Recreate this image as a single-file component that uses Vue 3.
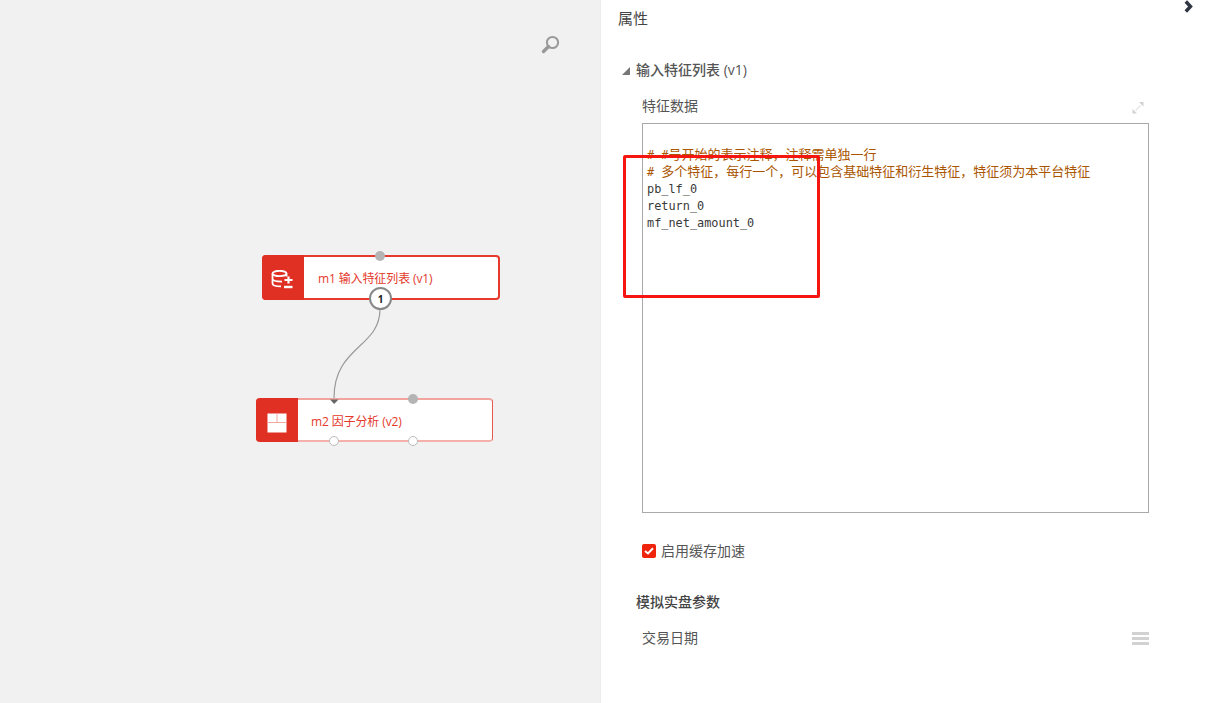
<script setup>
const codeLines = [
  [['l', '# #'], ['c', '号开始的表示注释，注释需单独一行']],
  [['l', '# '], ['c', '多个特征，每行一个，可以包含基础特征和衍生特征，特征须为本平台特征']],
]
const features = ['pb_lf_0', 'return_0', 'mf_net_amount_0']
</script>

<template>
  <div class="page">
    <section class="canvas">
      <svg class="search" width="24" height="24" viewBox="0 0 24 24">
        <circle cx="13.500" cy="9.500" r="5.600" fill="none" stroke="#999" stroke-width="2" />
        <path d="M9.500 13.500 L4.500 18.500" stroke="#999" stroke-width="3.400" stroke-linecap="round" />
      </svg>

      <svg class="edge" width="600" height="703" viewBox="0 0 600 703">
        <path d="M380 309 C380 348 334 346 334 398" fill="none" stroke="#999" stroke-width="1.200" />
        <path d="M330 399.500 H338.500 L334.200 404 Z" fill="#666" />
      </svg>

      <div class="node node-a">
        <div class="node-icon">
          <svg class="icon-db" width="23" height="20" viewBox="0 0 23 20" fill="none" stroke="#fff" stroke-width="1.800">
            <ellipse cx="8.500" cy="3.500" rx="7" ry="2.700" />
            <path d="M1.500 3.500 V13.500 C1.500 15.500 5 16.400 10 16.400 M1.500 8.800 C1.500 10.800 5 11.600 11 11.600 M15.500 3.500 V6.500" />
            <path d="M17.500 6.500 V13.500 M13.500 10 H21.500" stroke-width="2.200" />
            <path d="M13 17 H21.500" stroke-width="2.400" />
          </svg>
        </div>
        <div class="node-label">m1 输入特征列表 (v1)</div>
        <span class="port port-gray port-a-top"></span>
        <span class="badge">1</span>
      </div>

      <div class="node node-b">
        <div class="node-icon">
          <svg class="icon-grid" width="20" height="20" viewBox="0 0 20 20">
            <rect x="0.500" y="0.500" width="19" height="19" fill="#fff" />
            <path d="M10 0.500 V9.500 M0.500 9.500 H19.500" stroke="#f2a79f" stroke-width="1" />
          </svg>
        </div>
        <div class="node-label">m2 因子分析 (v2)</div>
        <span class="port port-gray port-b-top"></span>
        <span class="port port-white port-b-left"></span>
        <span class="port port-white port-b-right"></span>
      </div>
    </section>

    <aside class="panel">
      <svg class="collapse" width="10" height="14" viewBox="0 0 10 14" fill="none">
        <path d="M1.800 1.500 L6.500 6.500 L1.800 11.500" stroke="#2f3542" stroke-width="3.400" />
      </svg>

      <h2 class="title">属性</h2>

      <div class="group-head">
        <span class="triangle"></span>
        <span>输入特征列表 (v1)</span>
      </div>

      <div class="field">
        <div class="field-head">
          <span>特征数据</span>
          <svg class="expand" width="12" height="12" viewBox="0 0 12 12">
            <path d="M7 0 H11.500 V4.500 Z M0.500 7 V11.500 H5 Z" fill="#d2d2d2" />
            <path d="M3.500 8.500 L8.500 3.500" stroke="#e6e6e6" stroke-width="1.200" />
          </svg>
        </div>
        <div class="editor">
          <div v-for="(line, i) in codeLines" :key="i" class="code-line comment">
            <span v-for="(part, j) in line" :key="j" :class="part[0] === 'c' ? 'cjk' : ''">{{ part[1] }}</span>
          </div>
          <div v-for="f in features" :key="f" class="code-line">{{ f }}</div>
        </div>
      </div>

      <label class="check-row">
        <span class="check">
          <svg width="10" height="8" viewBox="0 0 10 8" fill="none">
            <path d="M1 4 L4 6.500 L9 1.200" stroke="#fff" stroke-width="2" />
          </svg>
        </span>
        <span class="check-text">启用缓存加速</span>
      </label>

      <div class="subhead">模拟实盘参数</div>

      <div class="date-row">
        <span class="date-text">交易日期</span>
        <span class="menu"><i></i><i></i><i></i></span>
      </div>

      <div class="highlight"></div>
    </aside>
  </div>
</template>

<style scoped>
.page {
  display: flex;
  width: 1205px;
  height: 703px;
  overflow: hidden;
  background: #fff;
  font-family: "Open Sans", "Noto Sans CJK SC", sans-serif;
  font-size: 14px;
  color: #555;
}

.canvas {
  position: relative;
  flex: 0 0 600px;
  background: #f1f1f1;
  border-right: 1px solid #ececec;
}

.search {
  position: absolute;
  left: 539px;
  top: 33px;
}

.edge {
  position: absolute;
  left: 0;
  top: 0;
  z-index: 2;
  pointer-events: none;
}

.node {
  position: absolute;
  display: flex;
  box-sizing: border-box;
  background: #fff;
  border-radius: 4px;
  color: #e4392c;
  font-size: 12px;
  letter-spacing: -0.120px;
}

.node-a {
  left: 262px;
  top: 255px;
  width: 238px;
  height: 45px;
  border: 2px solid #e8392d;
}

.node-b {
  left: 256px;
  top: 398px;
  width: 237px;
  height: 44px;
  border-style: solid;
  border-width: 2px 1px;
  border-color: #f2a49e #e8574c #f4b0ab #e8574c;
}

.node-icon {
  display: flex;
  align-items: center;
  justify-content: center;
  background: #e03024;
  box-sizing: border-box;
}

.node-a .node-icon {
  flex: 0 0 42px;
  margin: -2px 0 -2px -2px;
  border-radius: 4px 0 0 4px;
}

.node-b .node-icon {
  flex: 0 0 42px;
  margin: -2px 0 -2px -1px;
  border-radius: 4px 0 0 4px;
}

.icon-db {
  margin: 5px 0 0 -1px;
}

.icon-grid {
  margin-top: 5px;
}

.node-label {
  align-self: center;
  margin: 1px 0 0 14px;
  white-space: nowrap;
}

.node-b .node-label {
  margin: 2px 0 0 13px;
}

.port {
  position: absolute;
  box-sizing: border-box;
  border-radius: 50%;
  z-index: 3;
}

.port-gray {
  width: 10px;
  height: 10px;
  background: #b4b4b4;
}

.port-white {
  width: 10px;
  height: 10px;
  background: #fff;
  border: 1px solid #bbb;
}

.port-a-top {
  left: 111px;
  top: -6px;
}

.port-b-top {
  left: 151px;
  top: -6px;
}

.port-b-left {
  left: 72px;
  bottom: -6px;
}

.port-b-right {
  left: 151px;
  bottom: -6px;
}

.badge {
  position: absolute;
  left: 105px;
  top: 30px;
  width: 23px;
  height: 23px;
  box-sizing: border-box;
  display: flex;
  align-items: center;
  justify-content: center;
  background: #fff;
  border: 2px solid #888;
  border-radius: 50%;
  color: #222;
  font-size: 10px;
  font-weight: 700;
  z-index: 3;
}

.panel {
  position: relative;
  flex: 1;
  padding-left: 17px;
}

.collapse {
  position: absolute;
  left: 583px;
  top: 0;
}

.title {
  margin: 0;
  padding-top: 8px;
  font-size: 15px;
  font-weight: 400;
  line-height: 20px;
  color: #444;
}

.group-head {
  display: flex;
  align-items: center;
  margin: 31px 0 0 4px;
  height: 20px;
  font-weight: 500;
  color: #555;
}

.triangle {
  width: 0;
  height: 0;
  margin-right: 6px;
  margin-top: 3px;
  border-style: solid;
  border-width: 0 0 8px 8px;
  border-color: transparent transparent #777 transparent;
}

.field {
  width: 507px;
  margin: 16px 0 0 24px;
}

.field-head {
  display: flex;
  align-items: center;
  justify-content: space-between;
  height: 20px;
  padding-right: 5px;
  margin-bottom: 8px;
}

.expand {
  margin-top: 5px;
}

.editor {
  box-sizing: border-box;
  height: 390px;
  padding: 21px 4px 0;
  border: 1px solid #a9a9a9;
  font-family: "DejaVu Sans Mono", "Noto Sans CJK SC", monospace;
  font-size: 11.880px;
  color: #3a3a3a;
}

.code-line {
  height: 17.300px;
  line-height: 17.300px;
  white-space: pre;
}

.comment {
  color: #aa5500;
}

.comment + .code-line:not(.comment) {
  margin-top: 1px;
}

.cjk {
  font-family: "Noto Sans CJK SC", sans-serif;
  font-size: 13px;
}

.check-row {
  display: flex;
  align-items: center;
  gap: 5px;
  margin: 28px 0 0 24px;
  height: 20px;
}

.check-text {
  margin-top: -2px;
}

.check {
  display: flex;
  align-items: center;
  justify-content: center;
  width: 14px;
  height: 14px;
  background: #f0240c;
  border-radius: 2px;
}

.subhead {
  margin: 31px 0 0 18px;
  height: 20px;
  line-height: 20px;
  font-weight: 500;
  color: #444;
}

.date-row {
  display: flex;
  align-items: center;
  justify-content: space-between;
  width: 507px;
  height: 20px;
  margin: 16px 0 0 24px;
}

.date-text {
  margin-top: -2px;
}

.menu {
  display: flex;
  flex-direction: column;
  gap: 2px;
  width: 17px;
}

.menu i {
  display: block;
  height: 3px;
  background: #d2d2d2;
}

.highlight {
  position: absolute;
  left: 22px;
  top: 155px;
  width: 197px;
  height: 143px;
  box-sizing: border-box;
  border: 3px solid #f5170f;
  border-radius: 2px;
}
</style>
